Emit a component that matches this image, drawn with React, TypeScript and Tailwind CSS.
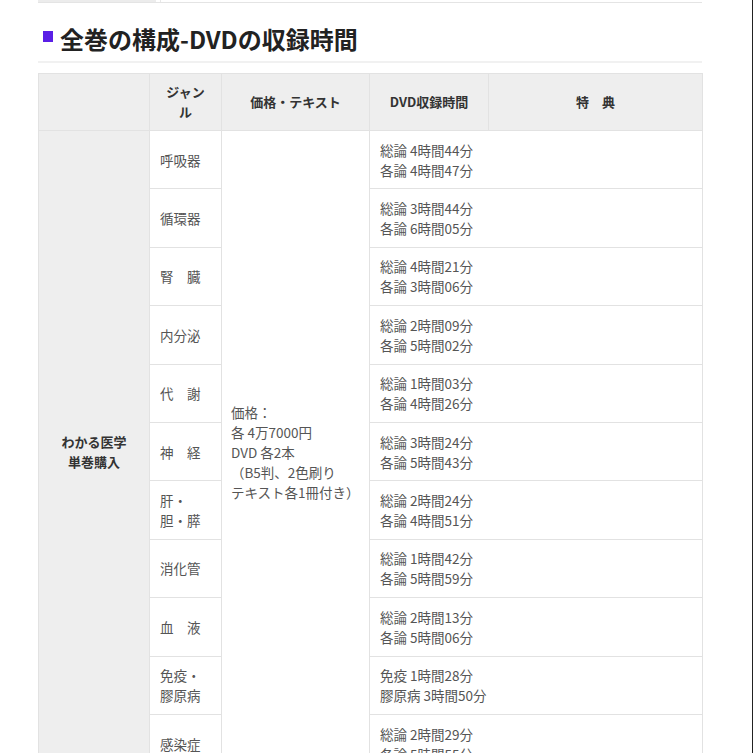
import React from 'react';

type Row = { genre: React.ReactNode; lines: [string, string] };

const rows: Row[] = [
  { genre: '呼吸器', lines: ['総論 4時間44分', '各論 4時間47分'] },
  { genre: '循環器', lines: ['総論 3時間44分', '各論 6時間05分'] },
  { genre: '腎　臓', lines: ['総論 4時間21分', '各論 3時間06分'] },
  { genre: '内分泌', lines: ['総論 2時間09分', '各論 5時間02分'] },
  { genre: '代　謝', lines: ['総論 1時間03分', '各論 4時間26分'] },
  { genre: '神　経', lines: ['総論 3時間24分', '各論 5時間43分'] },
  { genre: <>肝・<br />胆・膵</>, lines: ['総論 2時間24分', '各論 4時間51分'] },
  { genre: '消化管', lines: ['総論 1時間42分', '各論 5時間59分'] },
  { genre: '血　液', lines: ['総論 2時間13分', '各論 5時間06分'] },
  { genre: <>免疫・<br />膠原病</>, lines: ['免疫 1時間28分', '膠原病 3時間50分'] },
  { genre: '感染症', lines: ['総論 2時間29分', '各論 5時間55分'] },
];

const App: React.FC = () => {
  return (
    <div
      className="w-[753px] h-[753px] overflow-hidden bg-white border-r border-[#222]"
      style={{ fontFamily: '"Noto Sans CJK JP", "Noto Sans", sans-serif' }}
    >
      <div className="ml-[38px] w-[664px]">
        {/* previous table edge */}
        <div className="flex h-[3px] border-b border-[#e4e4e4]">
          <div className="w-[118px] bg-[#ececec]"></div>
          <div className="flex-1 border-l border-[#e8e8e8] ml-[4px]"></div>
        </div>

        {/* Section heading */}
        <div className="mt-[20px] pb-[6px] border-b-2 border-[#f1f1f1] flex items-center">
          <span className="ml-[5px] w-[10px] h-[11px] bg-[#5a1fe6] mb-[6px]"></span>
          <h2 className="ml-[7px] text-[24px] leading-[32px] font-bold text-[#222]">
            全巻の構成-DVDの収録時間
          </h2>
        </div>

        {/* Table */}
        <table className="mt-[10px] w-[664px] table-fixed border-collapse text-[13.5px] leading-[20px] text-[#555]">
          <colgroup>
            <col className="w-[111px]" />
            <col className="w-[72px]" />
            <col className="w-[148px]" />
            <col className="w-[119px]" />
            <col className="w-[214px]" />
          </colgroup>
          <thead>
            <tr className="h-[57px] bg-[#eeeeee] text-[#333] font-bold text-[13px]">
              <th className="border border-[#e2e2e2]"></th>
              <th className="border border-[#e2e2e2] px-[14px]">ジャンル</th>
              <th className="border border-[#e2e2e2]">価格・テキスト</th>
              <th className="border border-[#e2e2e2]">DVD収録時間</th>
              <th className="border border-[#e2e2e2]">特　典</th>
            </tr>
          </thead>
          <tbody>
            {rows.map((r, i) => (
              <tr key={i} className="h-[58.4px]">
                {i === 0 && (
                  <td
                    rowSpan={rows.length}
                    className="bg-[#eeeeee] border border-[#e2e2e2] text-center font-bold text-[#333] text-[13px] align-middle"
                  >
                    わかる医学
                    <br />
                    単巻購入
                  </td>
                )}
                <td className="border border-[#e2e2e2] px-[10px] align-middle">{r.genre}</td>
                {i === 0 && (
                  <td rowSpan={rows.length} className="border border-[#e2e2e2] pl-[9px] pr-[4px] align-middle">
                    価格：
                    <br />
                    各 4万7000円
                    <br />
                    DVD 各2本
                    <br />
                    （B5判、2色刷り
                    <br />
                    テキスト各1冊付き）
                  </td>
                )}
                <td colSpan={2} className="border border-[#e2e2e2] px-[10px] align-middle">
                  {r.lines[0]}
                  <br />
                  {r.lines[1]}
                </td>
              </tr>
            ))}
          </tbody>
        </table>
      </div>
    </div>
  );
};

export default App;
